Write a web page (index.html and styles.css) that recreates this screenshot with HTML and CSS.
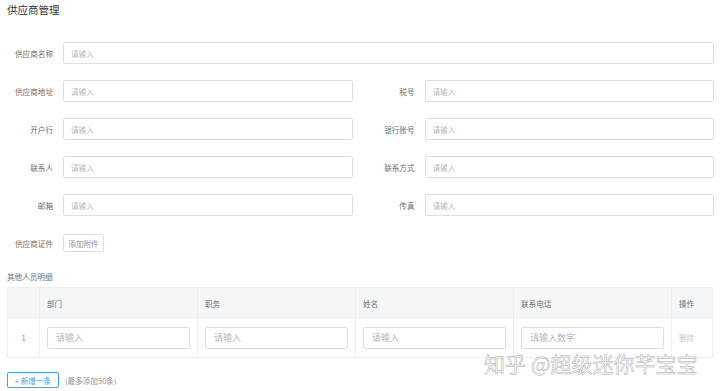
FILE: index.html
```html
<!DOCTYPE html>
<html lang="zh-CN">

<head>
    <meta charset="UTF-8">
    <meta name="viewport" content="width=device-width, initial-scale=1.0">
    <title>供应商管理</title>
    <link rel="stylesheet" href="styles.css">
</head>

<body>
    <div class="page">
        <h1 class="title">供应商管理</h1>

        <form class="form">
            <div class="field wide">
                <label>供应商名称</label>
                <input class="input" placeholder="请输入">
            </div>
            <div class="field">
                <label>供应商地址</label>
                <input class="input" placeholder="请输入">
            </div>
            <div class="field">
                <label>税号</label>
                <input class="input" placeholder="请输入">
            </div>
            <div class="field">
                <label>开户行</label>
                <input class="input" placeholder="请输入">
            </div>
            <div class="field">
                <label>银行账号</label>
                <input class="input" placeholder="请输入">
            </div>
            <div class="field">
                <label>联系人</label>
                <input class="input" placeholder="请输入">
            </div>
            <div class="field">
                <label>联系方式</label>
                <input class="input" placeholder="请输入">
            </div>
            <div class="field">
                <label>邮箱</label>
                <input class="input" placeholder="请输入">
            </div>
            <div class="field">
                <label>传真</label>
                <input class="input" placeholder="请输入">
            </div>
            <div class="field wide">
                <label>供应商证件</label>
                <button type="button" class="attach-button">添加附件</button>
            </div>
        </form>

        <div class="subtitle">其他人员明细</div>

        <table class="detail-table">
            <colgroup>
                <col class="col-index">
                <col class="col-data">
                <col class="col-data">
                <col class="col-data">
                <col class="col-data">
                <col>
            </colgroup>
            <thead>
                <tr>
                    <th></th>
                    <th>部门</th>
                    <th>职务</th>
                    <th>姓名</th>
                    <th>联系电话</th>
                    <th>操作</th>
                </tr>
            </thead>
            <tbody>
                <tr>
                    <td class="index-cell">1</td>
                    <td><input class="cell-input" placeholder="请输入"></td>
                    <td><input class="cell-input" placeholder="请输入"></td>
                    <td><input class="cell-input" placeholder="请输入"></td>
                    <td><input class="cell-input" placeholder="请输入数字"></td>
                    <td class="action-cell">删除</td>
                </tr>
            </tbody>
        </table>

        <div class="add-row">
            <button type="button" class="add-button">+ 新增一条</button>
            <span class="add-tip">(最多添加50条)</span>
        </div>

        <div class="watermark">知乎 @超级迷你芊宝宝</div>
    </div>
</body>

</html>
```

FILE: styles.css
```css
* {
    margin: 0;
    padding: 0;
    box-sizing: border-box;
}

body {
    font-family: 'Noto Sans CJK SC', 'Noto Sans', sans-serif;
    background-color: #fff;
    color: #606266;
}

.page {
    position: relative;
    padding: 0 6px 0 7px;
    height: 391px;
    overflow: hidden;
}

.title {
    font-size: 10.5px;
    font-weight: normal;
    line-height: 20px;
    color: #303133;
}

.form {
    display: grid;
    grid-template-columns: 1fr 1fr;
    column-gap: 16px;
    row-gap: 16px;
    margin-top: 22px;
}

.field {
    display: flex;
    align-items: center;
    height: 22px;
}

.field.wide {
    grid-column: 1 / -1;
}

.field label {
    flex-shrink: 0;
    width: 46px;
    margin-right: 10px;
    text-align: right;
    font-size: 7.6px;
    color: #6b6e74;
}

.input {
    flex: 1;
    min-width: 0;
    height: 22px;
    padding: 0 7px;
    border: 1px solid #dcdfe6;
    border-radius: 2px;
    font-family: inherit;
    font-size: 7.6px;
    color: #606266;
    outline: none;
}

.input::placeholder,
.cell-input::placeholder {
    color: #b4b9c2;
}

.attach-button {
    height: 18px;
    width: 41px;
    border: 1px solid #dcdfe6;
    border-radius: 2px;
    background-color: #fff;
    font-family: inherit;
    font-size: 7.6px;
    color: #909399;
}

.subtitle {
    margin: 16px 0 3px;
    font-size: 7.6px;
    line-height: 14px;
    color: #6b6e74;
}

.detail-table {
    width: 706px;
    border-collapse: collapse;
    table-layout: fixed;
    border: 1px solid #ebeef5;
}

.col-index {
    width: 32px;
}

.col-data {
    width: 158px;
}

.detail-table th {
    height: 31px;
    padding: 0 7px;
    background-color: #f5f6f8;
    border-right: 1px solid #ebeef5;
    text-align: left;
    font-size: 7.6px;
    font-weight: normal;
    color: #6b6e74;
}

.detail-table td {
    height: 39px;
    padding: 0 7px;
    border-right: 1px solid #ebeef5;
    font-size: 7.6px;
}

.index-cell {
    text-align: center;
    color: #8a8d93;
}

.action-cell {
    color: #c8ccd3;
}

.cell-input {
    display: block;
    width: 100%;
    height: 22px;
    padding: 0 8px;
    border: 1px solid #dcdfe6;
    border-radius: 2px;
    font-family: inherit;
    font-size: 9px;
    outline: none;
}

.add-row {
    display: flex;
    align-items: center;
    gap: 6px;
    margin-top: 14px;
}

.add-button {
    height: 16px;
    width: 52px;
    border: 1px solid #409eff;
    border-radius: 2px;
    background-color: #fff;
    font-family: inherit;
    font-size: 7.6px;
    color: #409eff;
}

.add-tip {
    font-size: 7.6px;
    color: #909399;
}

.watermark {
    position: absolute;
    left: 484px;
    top: 348px;
    font-size: 21px;
    line-height: 30px;
    color: #fff;
    -webkit-text-stroke: 0.5px #a8a8a8;
    white-space: nowrap;
}
```
